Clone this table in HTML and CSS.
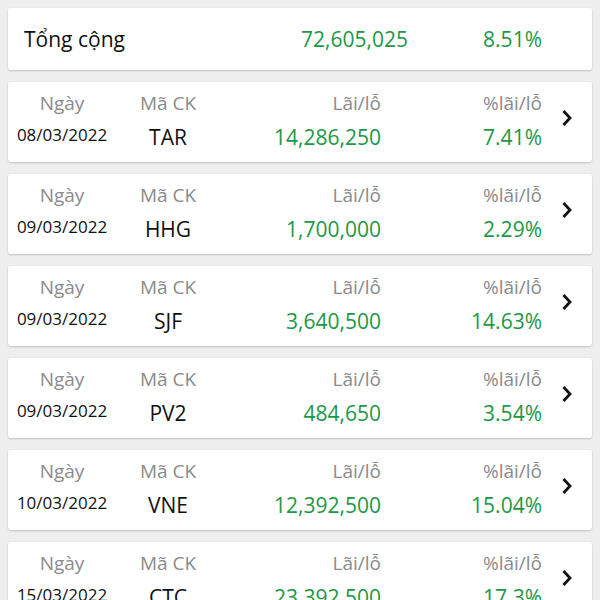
FILE: index.html
```html
<!DOCTYPE html>
<html lang="vi">
<head>
<meta charset="utf-8">
<link rel="stylesheet" href="styles.css">
</head>
<body>
<div class="list">
  <div class="card total">
    <div class="total-label">Tổng cộng</div>
    <div class="total-value green">72,605,025</div>
    <div class="total-pct green">8.51%</div>
  </div>

  <div class="card row">
    <div class="cell c1"><span class="lbl">Ngày</span><span class="date">08/03/2022</span></div>
    <div class="cell c2"><span class="lbl">Mã CK</span><span class="code">TAR</span></div>
    <div class="cell c3"><span class="lbl">Lãi/lỗ</span><span class="val green">14,286,250</span></div>
    <div class="cell c4"><span class="lbl">%lãi/lỗ</span><span class="val green">7.41%</span></div>
    <div class="chev"><svg width="12" height="18" viewBox="0 0 12 18"><path d="M2.5 2 L9 9 L2.5 16" fill="none" stroke="#111" stroke-width="2.8"/></svg></div>
  </div>

  <div class="card row">
    <div class="cell c1"><span class="lbl">Ngày</span><span class="date">09/03/2022</span></div>
    <div class="cell c2"><span class="lbl">Mã CK</span><span class="code">HHG</span></div>
    <div class="cell c3"><span class="lbl">Lãi/lỗ</span><span class="val green">1,700,000</span></div>
    <div class="cell c4"><span class="lbl">%lãi/lỗ</span><span class="val green">2.29%</span></div>
    <div class="chev"><svg width="12" height="18" viewBox="0 0 12 18"><path d="M2.5 2 L9 9 L2.5 16" fill="none" stroke="#111" stroke-width="2.8"/></svg></div>
  </div>

  <div class="card row">
    <div class="cell c1"><span class="lbl">Ngày</span><span class="date">09/03/2022</span></div>
    <div class="cell c2"><span class="lbl">Mã CK</span><span class="code">SJF</span></div>
    <div class="cell c3"><span class="lbl">Lãi/lỗ</span><span class="val green">3,640,500</span></div>
    <div class="cell c4"><span class="lbl">%lãi/lỗ</span><span class="val green">14.63%</span></div>
    <div class="chev"><svg width="12" height="18" viewBox="0 0 12 18"><path d="M2.5 2 L9 9 L2.5 16" fill="none" stroke="#111" stroke-width="2.8"/></svg></div>
  </div>

  <div class="card row">
    <div class="cell c1"><span class="lbl">Ngày</span><span class="date">09/03/2022</span></div>
    <div class="cell c2"><span class="lbl">Mã CK</span><span class="code">PV2</span></div>
    <div class="cell c3"><span class="lbl">Lãi/lỗ</span><span class="val green">484,650</span></div>
    <div class="cell c4"><span class="lbl">%lãi/lỗ</span><span class="val green">3.54%</span></div>
    <div class="chev"><svg width="12" height="18" viewBox="0 0 12 18"><path d="M2.5 2 L9 9 L2.5 16" fill="none" stroke="#111" stroke-width="2.8"/></svg></div>
  </div>

  <div class="card row">
    <div class="cell c1"><span class="lbl">Ngày</span><span class="date">10/03/2022</span></div>
    <div class="cell c2"><span class="lbl">Mã CK</span><span class="code">VNE</span></div>
    <div class="cell c3"><span class="lbl">Lãi/lỗ</span><span class="val green">12,392,500</span></div>
    <div class="cell c4"><span class="lbl">%lãi/lỗ</span><span class="val green">15.04%</span></div>
    <div class="chev"><svg width="12" height="18" viewBox="0 0 12 18"><path d="M2.5 2 L9 9 L2.5 16" fill="none" stroke="#111" stroke-width="2.8"/></svg></div>
  </div>

  <div class="card row">
    <div class="cell c1"><span class="lbl">Ngày</span><span class="date">15/03/2022</span></div>
    <div class="cell c2"><span class="lbl">Mã CK</span><span class="code">CTC</span></div>
    <div class="cell c3"><span class="lbl">Lãi/lỗ</span><span class="val green">23,392,500</span></div>
    <div class="cell c4"><span class="lbl">%lãi/lỗ</span><span class="val green">17.3%</span></div>
    <div class="chev"><svg width="12" height="18" viewBox="0 0 12 18"><path d="M2.5 2 L9 9 L2.5 16" fill="none" stroke="#111" stroke-width="2.8"/></svg></div>
  </div>
</div>
</body>
</html>
```

FILE: styles.css
```css
* { box-sizing: border-box; }
html, body { margin: 0; padding: 0; }
body {
  background: #eeeeee;
  font-family: "Open Sans", "Noto Sans", sans-serif;
  color: #111;
  overflow: hidden;
  height: 600px;
}
.list {
  display: flex;
  flex-direction: column;
  gap: 12px;
  padding: 8px 8px 0;
}
.card {
  background: #fff;
  border-radius: 2px;
  box-shadow: 0 1px 2px rgba(0,0,0,0.18), 0 0 1px rgba(0,0,0,0.08);
}
.green { color: #1c9846; }

.total {
  height: 62px;
  display: grid;
  grid-template-columns: 200px 184px 134px;
  align-items: center;
  padding-left: 16px;
}
.total-label { font-size: 21px; }
.total-value { font-size: 21px; text-align: right; }
.total-pct { font-size: 21px; text-align: right; }

.row {
  height: 80px;
  display: grid;
  grid-template-columns: 108px 104px 161px 161px 50px;
  padding-top: 8px;
}
.cell {
  display: flex;
  flex-direction: column;
}
.c1, .c2 { align-items: center; }
.c3, .c4 { align-items: flex-end; }
.lbl {
  font-size: 19px;
  line-height: 26px;
  color: #8a8a8a;
}
.date {
  font-size: 17px;
  line-height: 30px;
  margin-top: 4px;
  font-weight: 500;
}
.code, .val {
  font-size: 21px;
  line-height: 30px;
  margin-top: 6px;
}
.code { font-weight: 500; }
.chev {
  display: flex;
  align-items: center;
  justify-content: center;
  padding-bottom: 16px;
}
.chev svg { display: block; }
```
